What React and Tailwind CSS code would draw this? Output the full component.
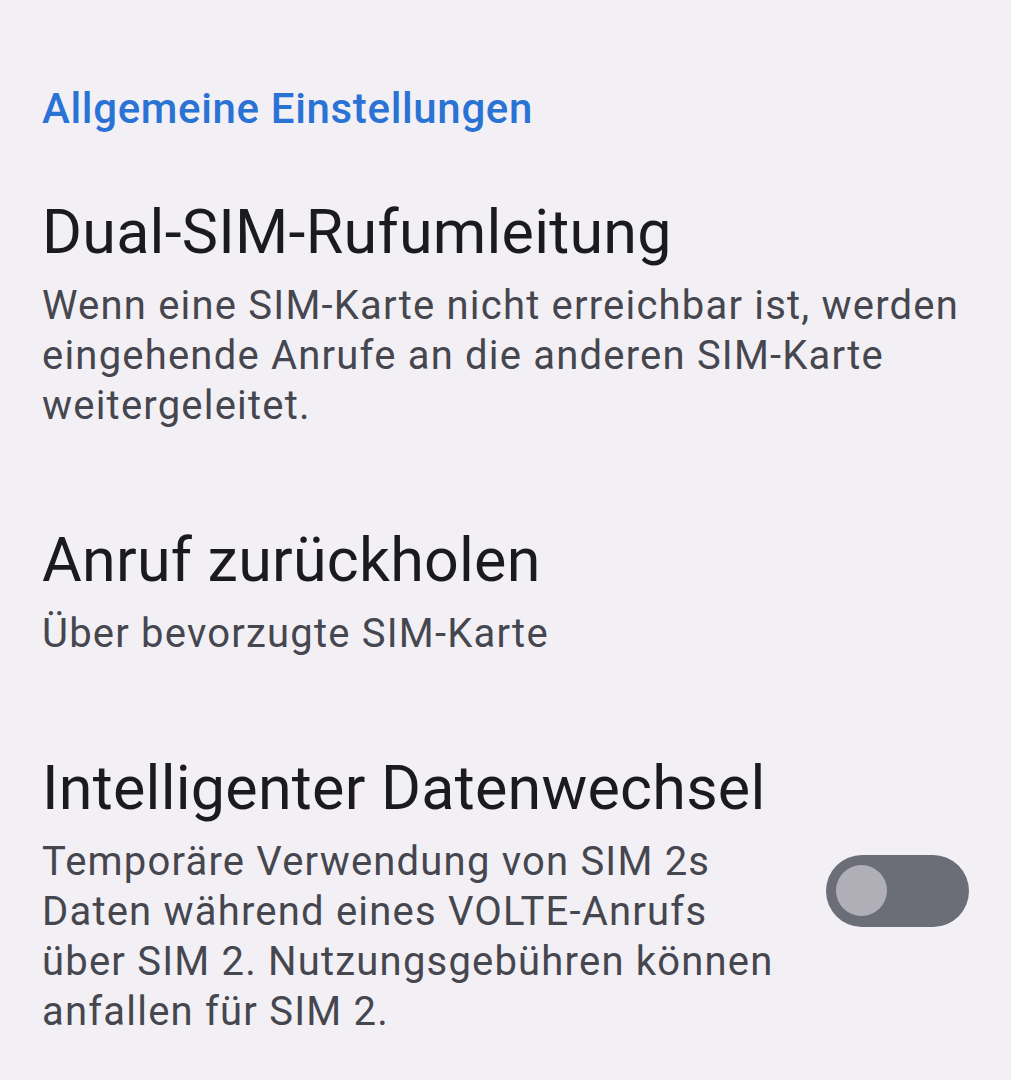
export default function App() {
  return (
    <div className="min-h-[1080px] w-full bg-[#f2f0f5] px-[42px] pt-[85px] pb-[40px] overflow-hidden" style={{ fontFamily: "Roboto, 'Noto Sans', sans-serif" }}>
      <div className="text-[42px] leading-[48px] font-medium tracking-[0.65px] text-[#2a73d5]">Allgemeine Einstellungen</div>
      <div className="mt-[63px] flex flex-col gap-[93px]">
        <div>
          <div className="text-[61px] leading-[72px] tracking-[0.25px] text-[#1b1b1f]">Dual-SIM-Rufumleitung</div>
          <div className="mt-[13px] text-[40px] leading-[50px] tracking-[1.2px] text-[#46464f]">
            Wenn eine SIM-Karte nicht erreichbar ist, werden eingehende Anrufe an die anderen SIM-Karte weitergeleitet.
          </div>
        </div>
        <div>
          <div className="text-[61px] leading-[72px] tracking-[0.25px] text-[#1b1b1f]">Anruf zurückholen</div>
          <div className="mt-[13px] text-[40px] leading-[50px] tracking-[1.2px] text-[#46464f]">Über bevorzugte SIM-Karte</div>
        </div>
        <div className="flex items-center">
          <div className="flex-1 min-w-0">
            <div className="text-[61px] leading-[72px] tracking-[0.25px] text-[#1b1b1f] whitespace-nowrap">Intelligenter Datenwechsel</div>
            <div className="mt-[13px] text-[40px] leading-[50px] tracking-[1.2px] text-[#46464f] pr-[30px]">
              Temporäre Verwendung von SIM 2s Daten während eines VOLTE-Anrufs über SIM 2. Nutzungsgebühren können anfallen für SIM 2.
            </div>
          </div>
          <div className="w-[143px] h-[72px] shrink-0 rounded-full bg-[#6b6d77] flex items-center pl-[10px] mb-[8px]">
            <div className="w-[51px] h-[51px] rounded-full bg-[#b0afb8]" />
          </div>
        </div>
      </div>
    </div>
  );
}
